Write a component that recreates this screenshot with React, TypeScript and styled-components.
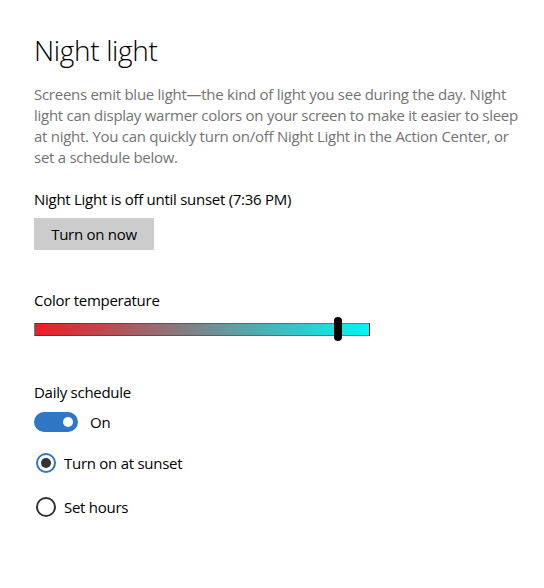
import styled, { createGlobalStyle } from "styled-components";

const GlobalStyle = createGlobalStyle`
  body {
    margin: 0;
    background: #ffffff;
    font-family: "Open Sans", "Noto Sans", sans-serif;
    letter-spacing: -0.27px;
  }
`;

const Page = styled.div`
  display: flex;
  flex-direction: column;
  align-items: flex-start;
  width: 544px;
  height: 588px;
  box-sizing: border-box;
  padding: 30px 34px 0 34px;
  color: #000000;
`;

const Title = styled.h1`
  margin: 0;
  font-size: 28px;
  font-weight: 300;
  line-height: 40px;
  letter-spacing: -0.35px;
`;

const Description = styled.p`
  margin: 14px 0 0 0;
  width: 484px;
  font-size: 15px;
  line-height: 21px;
  color: #737373;
`;

const Label = styled.div<{ gap: number }>`
  margin-top: ${({ gap }) => gap}px;
  font-size: 15px;
  line-height: 21px;
`;

const Button = styled.button`
  margin-top: 8px;
  width: 120px;
  height: 32px;
  padding: 0;
  border: none;
  background: #cccccc;
  font-family: inherit;
  letter-spacing: inherit;
  font-size: 15px;
  color: #000000;
`;

const Slider = styled.div`
  position: relative;
  margin-top: 6px;
  width: 336px;
  height: 24px;
  display: flex;
  align-items: center;
`;

const Track = styled.div`
  width: 100%;
  height: 13px;
  box-sizing: border-box;
  border: 1px solid rgba(0, 0, 0, 0.3);
  background: linear-gradient(to right, #ee1c25, #00f6f6);
`;

const Thumb = styled.div`
  position: absolute;
  top: 0;
  left: 300px;
  width: 8px;
  height: 24px;
  border-radius: 4px;
  background: #000000;
`;

const Row = styled.div<{ gap: number }>`
  display: flex;
  align-items: center;
  margin-top: ${({ gap }) => gap}px;
  height: 20px;
  font-size: 15px;
  line-height: 20px;
`;

const Toggle = styled.div`
  display: flex;
  align-items: center;
  justify-content: flex-end;
  box-sizing: border-box;
  width: 44px;
  height: 20px;
  padding-right: 5px;
  border-radius: 10px;
  background: #2f77c4;
  margin-right: 12px;
`;

const Knob = styled.div`
  width: 10px;
  height: 10px;
  border-radius: 50%;
  background: #ffffff;
`;

const Radio = styled.div<{ checked: boolean }>`
  display: flex;
  align-items: center;
  justify-content: center;
  box-sizing: border-box;
  width: 20px;
  height: 20px;
  margin-left: 2px;
  margin-right: 8px;
  border-radius: 50%;
  border: 2px solid ${({ checked }) => (checked ? "#2f77c4" : "#333333")};
`;

const Dot = styled.div`
  width: 10px;
  height: 10px;
  border-radius: 50%;
  background: #333333;
`;

export default function App() {
  return (
    <>
      <GlobalStyle />
      <Page>
        <Title>Night light</Title>
        <Description>
          Screens emit blue light—the kind of light you see during the day. Night
          light can display warmer colors on your screen to make it easier to sleep
          at night. You can quickly turn on/off Night Light in the Action Center, or
          set a schedule below.
        </Description>
        <Label gap={21}>Night Light is off until sunset (7:36 PM)</Label>
        <Button>Turn on now</Button>
        <Label gap={40}>Color temperature</Label>
        <Slider>
          <Track />
          <Thumb />
        </Slider>
        <Label gap={41}>Daily schedule</Label>
        <Row gap={9}>
          <Toggle>
            <Knob />
          </Toggle>
          On
        </Row>
        <Row gap={21}>
          <Radio checked>
            <Dot />
          </Radio>
          Turn on at sunset
        </Row>
        <Row gap={24}>
          <Radio checked={false} />
          Set hours
        </Row>
      </Page>
    </>
  );
}
